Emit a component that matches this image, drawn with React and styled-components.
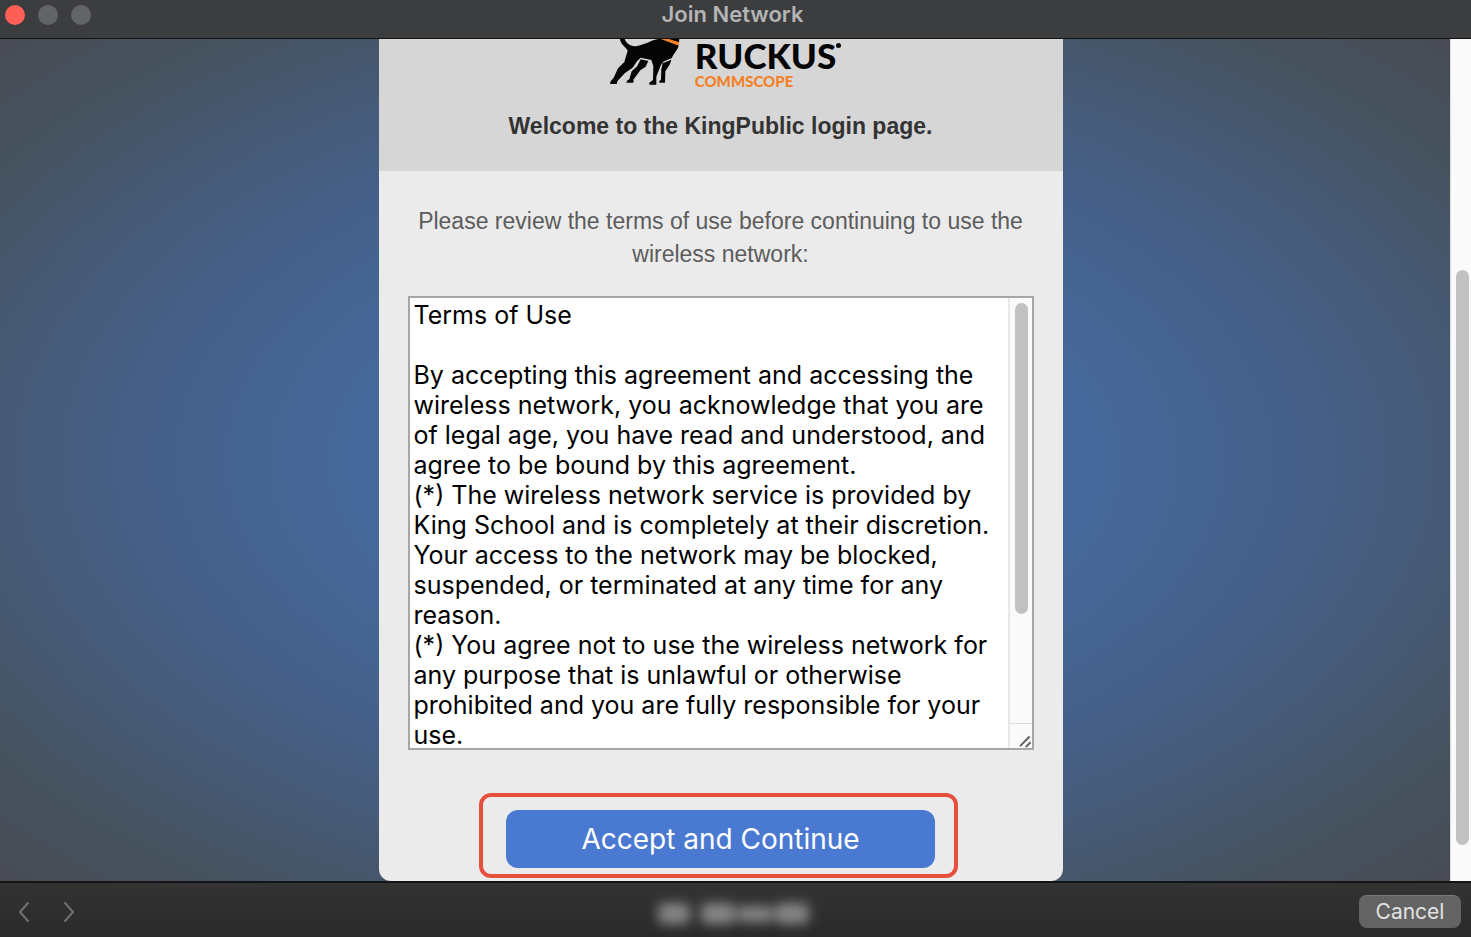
import React from "react";
import styled, { createGlobalStyle } from "styled-components";

const GlobalStyle = createGlobalStyle`
  *, *::before, *::after { box-sizing: border-box; }
  body { margin: 0; background: #2c2c2c; }
`;

const uiFont = `Inter, "Liberation Sans", sans-serif`;
const pageFont = `"Liberation Sans", Arial, sans-serif`;

const Window = styled.div`
  display: flex;
  flex-direction: column;
  height: 100vh;
  overflow: hidden;
  font-family: ${uiFont};
`;

const TitleBar = styled.header`
  display: grid;
  grid-template-columns: 1fr auto 1fr;
  align-items: start;
  flex: none;
  height: 39px;
  padding: 0 11px 0 5px;
  background: #3c3d3f;
  border-bottom: 1px solid #111214;
`;

const Lights = styled.div`
  display: flex;
  gap: 13px;
  padding-top: 5px;
`;

const Light = styled.button`
  width: 20px;
  height: 20px;
  padding: 0;
  border: 0;
  border-radius: 50%;
  background: ${(p) => p.$color};
`;

const Title = styled.h1`
  margin: 0;
  color: #b4b5b6;
  font-size: 22px;
  font-weight: 600;
  line-height: 28px;
`;

const Viewport = styled.div`
  display: flex;
  flex: 1;
  min-height: 0;
`;

const Page = styled.main`
  flex: 1;
  display: flex;
  justify-content: center;
  padding-right: 9px;
  background: radial-gradient(ellipse farthest-corner at 50% 50%, #4a72ad 0%, #466a9e 33%, #456089 56%, #465a76 71%, #46535f 86%, #484b55 100%);
`;

const ScrollTrack = styled.div`
  flex: none;
  width: 21px;
  padding: 231px 2px 0 5px;
  background: #fafafa;
  border-left: 1px solid #dcdcdc;
`;

const PageThumb = styled.div`
  height: 575px;
  border-radius: 7px;
  background: #c1c1c1;
`;

const Card = styled.section`
  display: flex;
  flex-direction: column;
  width: 100%;
  max-width: 684px;
  border-radius: 0 0 12px 12px;
  background: #ebebeb;
`;

const CardHeader = styled.div`
  display: flex;
  flex-direction: column;
  align-items: center;
  flex: none;
  height: 132px;
  background: #d6d6d6;
`;

const Logo = styled.div`
  display: flex;
  gap: 15px;
  height: 50px;
  padding-left: 10px;
  font-family: Lato, sans-serif;
  font-weight: 900;
`;

const Wordmark = styled.div`
  display: flex;
  flex-direction: column;
`;

const Brand = styled.div`
  display: flex;
  height: 32px;
  color: #050505;
  font-size: 35px;
  line-height: 32px;
`;

const BrandDot = styled.span`
  width: 5px;
  height: 5px;
  margin-top: 4px;
  border-radius: 50%;
  background: #050505;
`;

const Parent = styled.div`
  color: #f58025;
  font-size: 15px;
  line-height: 20px;
`;

const Welcome = styled.h2`
  margin: 21px 0 0;
  color: #333;
  font-family: ${pageFont};
  font-size: 23px;
  font-weight: 700;
  line-height: 33px;
`;

const CardBody = styled.form`
  display: flex;
  flex-direction: column;
  align-items: center;
  padding: 34px 29px 0;
`;

const Prompt = styled.label`
  margin-bottom: 25px;
  color: #5c5c5c;
  font-family: ${pageFont};
  font-size: 23px;
  line-height: 33px;
  text-align: center;
`;

const TermsBox = styled.div`
  display: flex;
  width: 100%;
  height: 454px;
  border: 2px solid #a6a6a6;
  background: #fff;
`;

const TermsText = styled.textarea`
  flex: 1;
  min-width: 0;
  padding: 2px 4px;
  border: 0;
  outline: 0;
  resize: none;
  background: #fff;
  color: #000;
  font-family: ${uiFont};
  font-size: 25px;
  line-height: 30px;
  scrollbar-width: none;
`;

const TermsScroll = styled.div`
  display: flex;
  flex-direction: column;
  justify-content: space-between;
  flex: none;
  width: 24px;
  border-left: 2px solid #e8e8e8;
  background: #fafafa;
`;

const TermsThumb = styled.div`
  height: 311px;
  margin: 5px 4px 0 5px;
  border-radius: 7px;
  background: #c1c1c1;
`;

const Grip = styled.svg`
  display: block;
  width: 22px;
  height: 25px;
  border-top: 1px solid #dcdcdc;
`;

const Highlight = styled.div`
  width: 479px;
  max-width: 100%;
  height: 85px;
  margin: 43px 4px 0 0;
  padding: 13px 19px 0 23px;
  border: 4px solid #e64f3c;
  border-radius: 12px;
`;

const Accept = styled.button`
  display: block;
  width: 100%;
  height: 58px;
  padding: 0;
  border: 0;
  border-radius: 12px;
  background: #4a79d2;
  color: #fff;
  font-family: ${uiFont};
  font-size: 28px;
  line-height: 58px;
`;

const Footer = styled.footer`
  display: grid;
  grid-template-columns: 1fr auto 1fr;
  align-items: center;
  flex: none;
  height: 56px;
  padding: 3px 10px 0 14px;
  border-top: 2px solid #141414;
  background: linear-gradient(#333, #2a2a2a);
`;

const Nav = styled.nav`
  display: flex;
  gap: 25px;
`;

const NavButton = styled.button`
  width: 20px;
  height: 24px;
  padding: 0;
  border: 0;
  background: none;
  color: #707070;
`;

const Address = styled.svg`
  display: block;
  width: 200px;
  height: 50px;
`;

const Cancel = styled.button`
  justify-self: end;
  width: 102px;
  height: 33px;
  padding: 0;
  border: 0;
  border-top: 1px solid #7a7a7a;
  border-radius: 8px;
  background: #636363;
  color: #e2e2e2;
  font-family: ${uiFont};
  font-size: 21px;
  line-height: 30px;
`;

const terms = `Terms of Use

By accepting this agreement and accessing the wireless network, you acknowledge that you are of legal age, you have read and understood, and agree to be bound by this agreement.
(*) The wireless network service is provided by King School and is completely at their discretion. Your access to the network may be blocked, suspended, or terminated at any time for any reason.
(*) You agree not to use the wireless network for any purpose that is unlawful or otherwise prohibited and you are fully responsible for your use.`;

function Dog() {
  return (
    <svg width="70" height="47" viewBox="60 27 210 141" aria-hidden="true">
      <path
        fill="#050505"
        d="M90 27 C92 45 107 50 113 62 L103 96 L84 115 L71 143 L62 154 L60 162 L80 162 L82 154 L104 130 L128 113 L141 94 L152 83 L184 90 L190 108 L189 150 L178 158 L178 164 L199 164 L199 140 L213 104 L222 94 L246 84 C250 70 264 62 266 46 L268 27 L205 27 C185 30 165 44 138 49 C122 49 108 40 104 27 Z"
      />
      <path fill="#050505" d="M152 88 L175 93 L167 110 L151 121 L131 148 L130 158 L109 158 L111 152 L118 148 L125 124 L142 108 Z" />
      <path fill="#050505" d="M218 100 L244 89 L240 102 L226 124 L225 158 L208 158 L208 153 L213 149 L214 118 Z" />
      <path fill="#f58025" d="M212 27 L237 27 L268 37 L266 47 Z" />
    </svg>
  );
}

function Chevron({ d }) {
  return (
    <svg width="20" height="24" viewBox="0 0 20 24" fill="none" stroke="currentColor" strokeWidth="2" aria-hidden="true">
      <path d={d} strokeLinecap="round" strokeLinejoin="round" />
    </svg>
  );
}

export default function App() {
  return (
    <Window>
      <GlobalStyle />
      <TitleBar>
        <Lights>
          <Light type="button" aria-label="Close" $color="#ff5f57" />
          <Light type="button" aria-label="Minimize" $color="#636466" />
          <Light type="button" aria-label="Zoom" $color="#636466" />
        </Lights>
        <Title>Join Network</Title>
      </TitleBar>
      <Viewport>
        <Page>
          <Card>
            <CardHeader>
              <Logo>
                <Dog />
                <Wordmark>
                  <Brand>RUCKUS<BrandDot /></Brand>
                  <Parent>COMMSCOPE</Parent>
                </Wordmark>
              </Logo>
              <Welcome>Welcome to the KingPublic login page.</Welcome>
            </CardHeader>
            <CardBody onSubmit={(e) => e.preventDefault()}>
              <Prompt htmlFor="terms">
                Please review the terms of use before continuing to use the wireless network:
              </Prompt>
              <TermsBox>
                <TermsText id="terms" readOnly spellCheck={false} value={terms} />
                <TermsScroll>
                  <TermsThumb />
                  <Grip viewBox="0 0 22 25" fill="none" stroke="#606060" strokeWidth="2" aria-hidden="true">
                    <path d="M10 23 L20 13 M16 24 L21 19" />
                  </Grip>
                </TermsScroll>
              </TermsBox>
              <Highlight>
                <Accept type="submit">Accept and Continue</Accept>
              </Highlight>
            </CardBody>
          </Card>
        </Page>
        <ScrollTrack>
          <PageThumb />
        </ScrollTrack>
      </Viewport>
      <Footer>
        <Nav aria-label="History">
          <NavButton type="button" aria-label="Back"><Chevron d="M14 3 L6 12 L14 21" /></NavButton>
          <NavButton type="button" aria-label="Forward"><Chevron d="M6 3 L14 12 L6 21" /></NavButton>
        </Nav>
        <Address viewBox="0 0 200 50" aria-hidden="true">
          <defs>
            <filter id="soft" x="-20%" y="-100%" width="140%" height="300%">
              <feGaussianBlur stdDeviation="6" />
            </filter>
          </defs>
          <g filter="url(#soft)" fill="#858585">
            <rect x="20" y="16" width="32" height="21" rx="6" />
            <rect x="63" y="16" width="34" height="21" rx="6" />
            <rect x="99" y="19" width="36" height="16" rx="6" />
            <rect x="137" y="16" width="34" height="21" rx="6" />
          </g>
        </Address>
        <Cancel type="button">Cancel</Cancel>
      </Footer>
    </Window>
  );
}
